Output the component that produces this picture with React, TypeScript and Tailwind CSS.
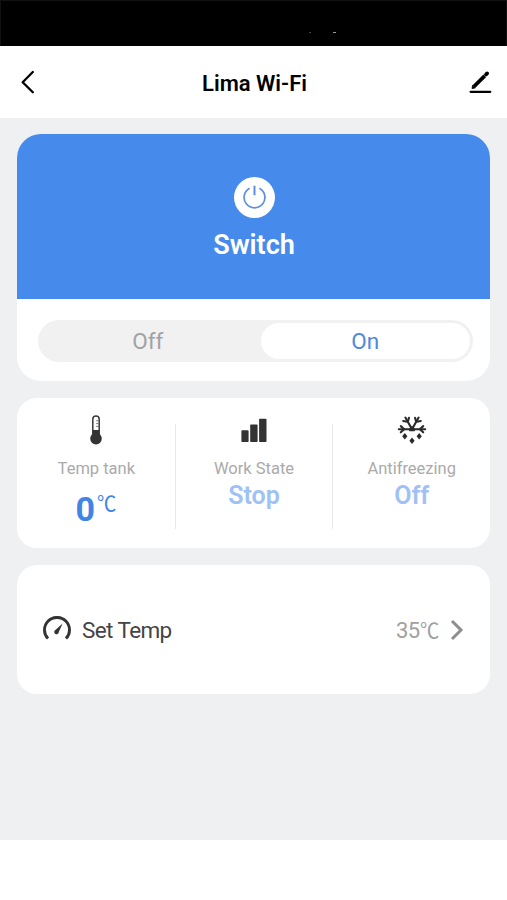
import { useState } from "react";
import type { ReactNode } from "react";

type SwitchState = "Off" | "On";

function BackIcon() {
  return (
    <svg width="14" height="24" viewBox="0 0 14 24" fill="none">
      <path
        d="M12.8 2 2.7 12.2 12.8 22.3"
        stroke="#000"
        strokeWidth="2.3"
        strokeLinecap="round"
        strokeLinejoin="round"
      />
    </svg>
  );
}

function EditIcon() {
  return (
    <svg width="24" height="24" viewBox="0 0 24 24" fill="none" stroke="#000">
      <path d="M5 16.5 15.7 5.8" strokeWidth="3.8" />
      <path d="M3 18.5 3.6 15.2 6.3 17.9Z" strokeWidth="0.8" fill="#000" />
      <path d="M17 4.5 18.1 3.4" strokeWidth="3.8" strokeLinecap="round" />
      <path d="M1.6 21.8H21.3" strokeWidth="2.2" strokeLinecap="round" />
    </svg>
  );
}

function PowerIcon() {
  return (
    <svg width="41" height="41" viewBox="0 0 41 41" fill="none">
      <circle cx="20.5" cy="20.5" r="20.5" fill="#fff" />
      <path
        d="M15.6 11.3A10.4 10.4 0 1 0 25.4 11.3"
        stroke="#5c8fdd"
        strokeWidth="1.7"
      />
      <path d="M20.5 8.8V18.2" stroke="#5c8fdd" strokeWidth="2" />
    </svg>
  );
}

function ThermometerIcon() {
  return (
    <svg width="14" height="30" viewBox="0 0 14 30" fill="none">
      <path
        d="M3.8 21V4.2a3.2 3.2 0 0 1 6.4 0V21"
        stroke="#3a3a3a"
        strokeWidth="1.5"
      />
      <path d="M3.6 15H10.4V21H3.6Z" fill="#333" />
      <circle cx="7" cy="23.6" r="5.8" fill="#333" />
      <path
        d="M7.2 5.8H9.6M7.2 8.6H9.6M7.2 11.4H9.6"
        stroke="#666"
        strokeWidth="0.9"
      />
    </svg>
  );
}

function BarsIcon() {
  return (
    <svg width="26" height="30" viewBox="0 0 26 30" fill="#333">
      <rect x="0.4" y="15.3" width="7.2" height="11.8" rx="0.8" />
      <rect x="9.2" y="9.6" width="7.4" height="17.5" rx="0.8" />
      <rect x="18.1" y="3.8" width="7.4" height="23.3" rx="0.8" />
    </svg>
  );
}

function SnowIcon() {
  return (
    <svg width="30" height="30" viewBox="0 0 30 30" fill="none">
      <g stroke="#2b2b2b" strokeWidth="2.1" strokeLinecap="round">
        <path d="M1.8 14.2H28.2M15 14.2 8.4 2.6M15 14.2 21.6 2.6" />
        <path d="M3.8 11.1 7.2 14.2 3.8 17.3M26.2 11.1 22.8 14.2 26.2 17.3" />
        <path d="M6.2 6 10.8 6.9 12 2.8M23.8 6 19.2 6.9 18 2.8" />
      </g>
      <path d="M15 10.8 18.4 14.2 17.6 16.2H12.4L11.6 14.2Z" fill="#2b2b2b" />
      <path
        d="M7.8 18 10.4 21.2 7.8 24.4 5.2 21.2ZM22.2 18 24.8 21.2 22.2 24.4 19.6 21.2ZM15 22.6 17.6 25.8 15 29 12.4 25.8Z"
        fill="#2b2b2b"
      />
    </svg>
  );
}

function GaugeIcon() {
  return (
    <svg width="28" height="28" viewBox="0 0 28 28" fill="none">
      <path
        d="M5 22.6A12.5 12.5 0 1 1 23 22.6"
        stroke="#333"
        strokeWidth="2.9"
      />
      <path d="M19.6 7.6 15.8 16A2.3 2.3 0 1 1 12.4 13.9Z" fill="#333" />
    </svg>
  );
}

function ChevronIcon() {
  return (
    <svg width="14" height="22" viewBox="0 0 14 22" fill="none">
      <path d="M2 2 11 11 2 20" stroke="#8e8e8e" strokeWidth="3" />
    </svg>
  );
}

function StatusItem({
  icon,
  label,
  children,
}: {
  icon: ReactNode;
  label: string;
  children: ReactNode;
}) {
  return (
    <div className="flex flex-1 flex-col items-center pt-[17px]">
      <div className="h-[30px]">{icon}</div>
      <p className="mt-[13.5px] text-[16.5px] leading-5 text-[#aaa]">{label}</p>
      {children}
    </div>
  );
}

function Divider() {
  return <div className="mt-[26px] h-[105px] w-px bg-[#e8e8e8]" />;
}

export default function App() {
  const [power, setPower] = useState<SwitchState>("On");

  return (
    <div className="flex h-[900px] w-[507px] flex-col bg-white font-[Roboto,'Noto_Sans_CJK_SC',sans-serif]">
      <div className="flex h-[46px] shrink-0 items-start gap-[22px] border border-b-0 border-[#111] bg-black pt-[31px] pl-[308px]">
        <span className="h-px w-[2px] bg-[#444]" />
        <span className="h-px w-[3px] bg-[#999]" />
      </div>

      <header className="flex h-[72px] shrink-0 items-center justify-between pr-[14px] pl-5">
        <button className="w-5" aria-label="Back">
          <BackIcon />
        </button>
        <h1 className="pt-[3px] text-[22px] leading-7 font-semibold text-black">
          Lima Wi-Fi
        </h1>
        <button aria-label="Edit">
          <EditIcon />
        </button>
      </header>

      <main className="flex h-[722px] shrink-0 flex-col gap-[17px] bg-[#eff0f2] px-[17px] pt-4">
        <section className="h-[247px] overflow-hidden rounded-[24px] bg-white">
          <div className="flex h-[164.5px] flex-col items-center bg-[#468beb] pt-[43px] pl-px">
            <PowerIcon />
            <h2 className="mt-[10.5px] text-[27px] leading-8 font-semibold text-white">
              Switch
            </h2>
          </div>
          <div className="mt-[21.5px] mr-[17px] ml-[21px] flex h-[42px] gap-2 rounded-full bg-[#f1f1f1] p-[3px]">
            {(["Off", "On"] as const).map((state) => (
              <button
                key={state}
                onClick={() => setPower(state)}
                className={`flex-1 rounded-full text-[22.5px] leading-none ${
                  power === state
                    ? "bg-white text-[#5088dc]"
                    : "pl-[2px] text-[#a0a2a4]"
                }`}
              >
                {state}
              </button>
            ))}
          </div>
        </section>

        <section className="flex h-[150px] rounded-[20px] bg-white pl-px">
          <StatusItem icon={<ThermometerIcon />} label="Temp tank">
            <p className="mt-[10.5px] flex items-start text-[#4284e4]">
              <span className="text-[34px] leading-10 font-bold">0</span>
              <span className="ml-[2px] w-5 origin-left scale-x-[0.92] pt-px text-[21px] leading-7">
                ℃
              </span>
            </p>
          </StatusItem>
          <Divider />
          <StatusItem icon={<BarsIcon />} label="Work State">
            <p className="mt-[3.5px] text-[25px] leading-7 font-semibold text-[#a0c1f5]">
              Stop
            </p>
          </StatusItem>
          <Divider />
          <StatusItem icon={<SnowIcon />} label="Antifreezing">
            <p className="mt-[3.5px] text-[25px] leading-7 font-semibold text-[#a0c1f5]">
              Off
            </p>
          </StatusItem>
        </section>

        <section className="flex h-[129px] items-center rounded-[20px] bg-white px-[26px]">
          <GaugeIcon />
          <span className="ml-[11px] pt-[3px] text-[22.5px] tracking-[-0.6px] text-[#444]">
            Set Temp
          </span>
          <span className="ml-auto flex items-baseline pt-[2px] text-[22px] tracking-[-0.6px] text-[#a0a0a0]">
            35
            <span className="w-5 origin-left scale-x-[0.92] text-[21px]">
              ℃
            </span>
          </span>
          <span className="ml-[10.5px]">
            <ChevronIcon />
          </span>
        </section>
      </main>
    </div>
  );
}
